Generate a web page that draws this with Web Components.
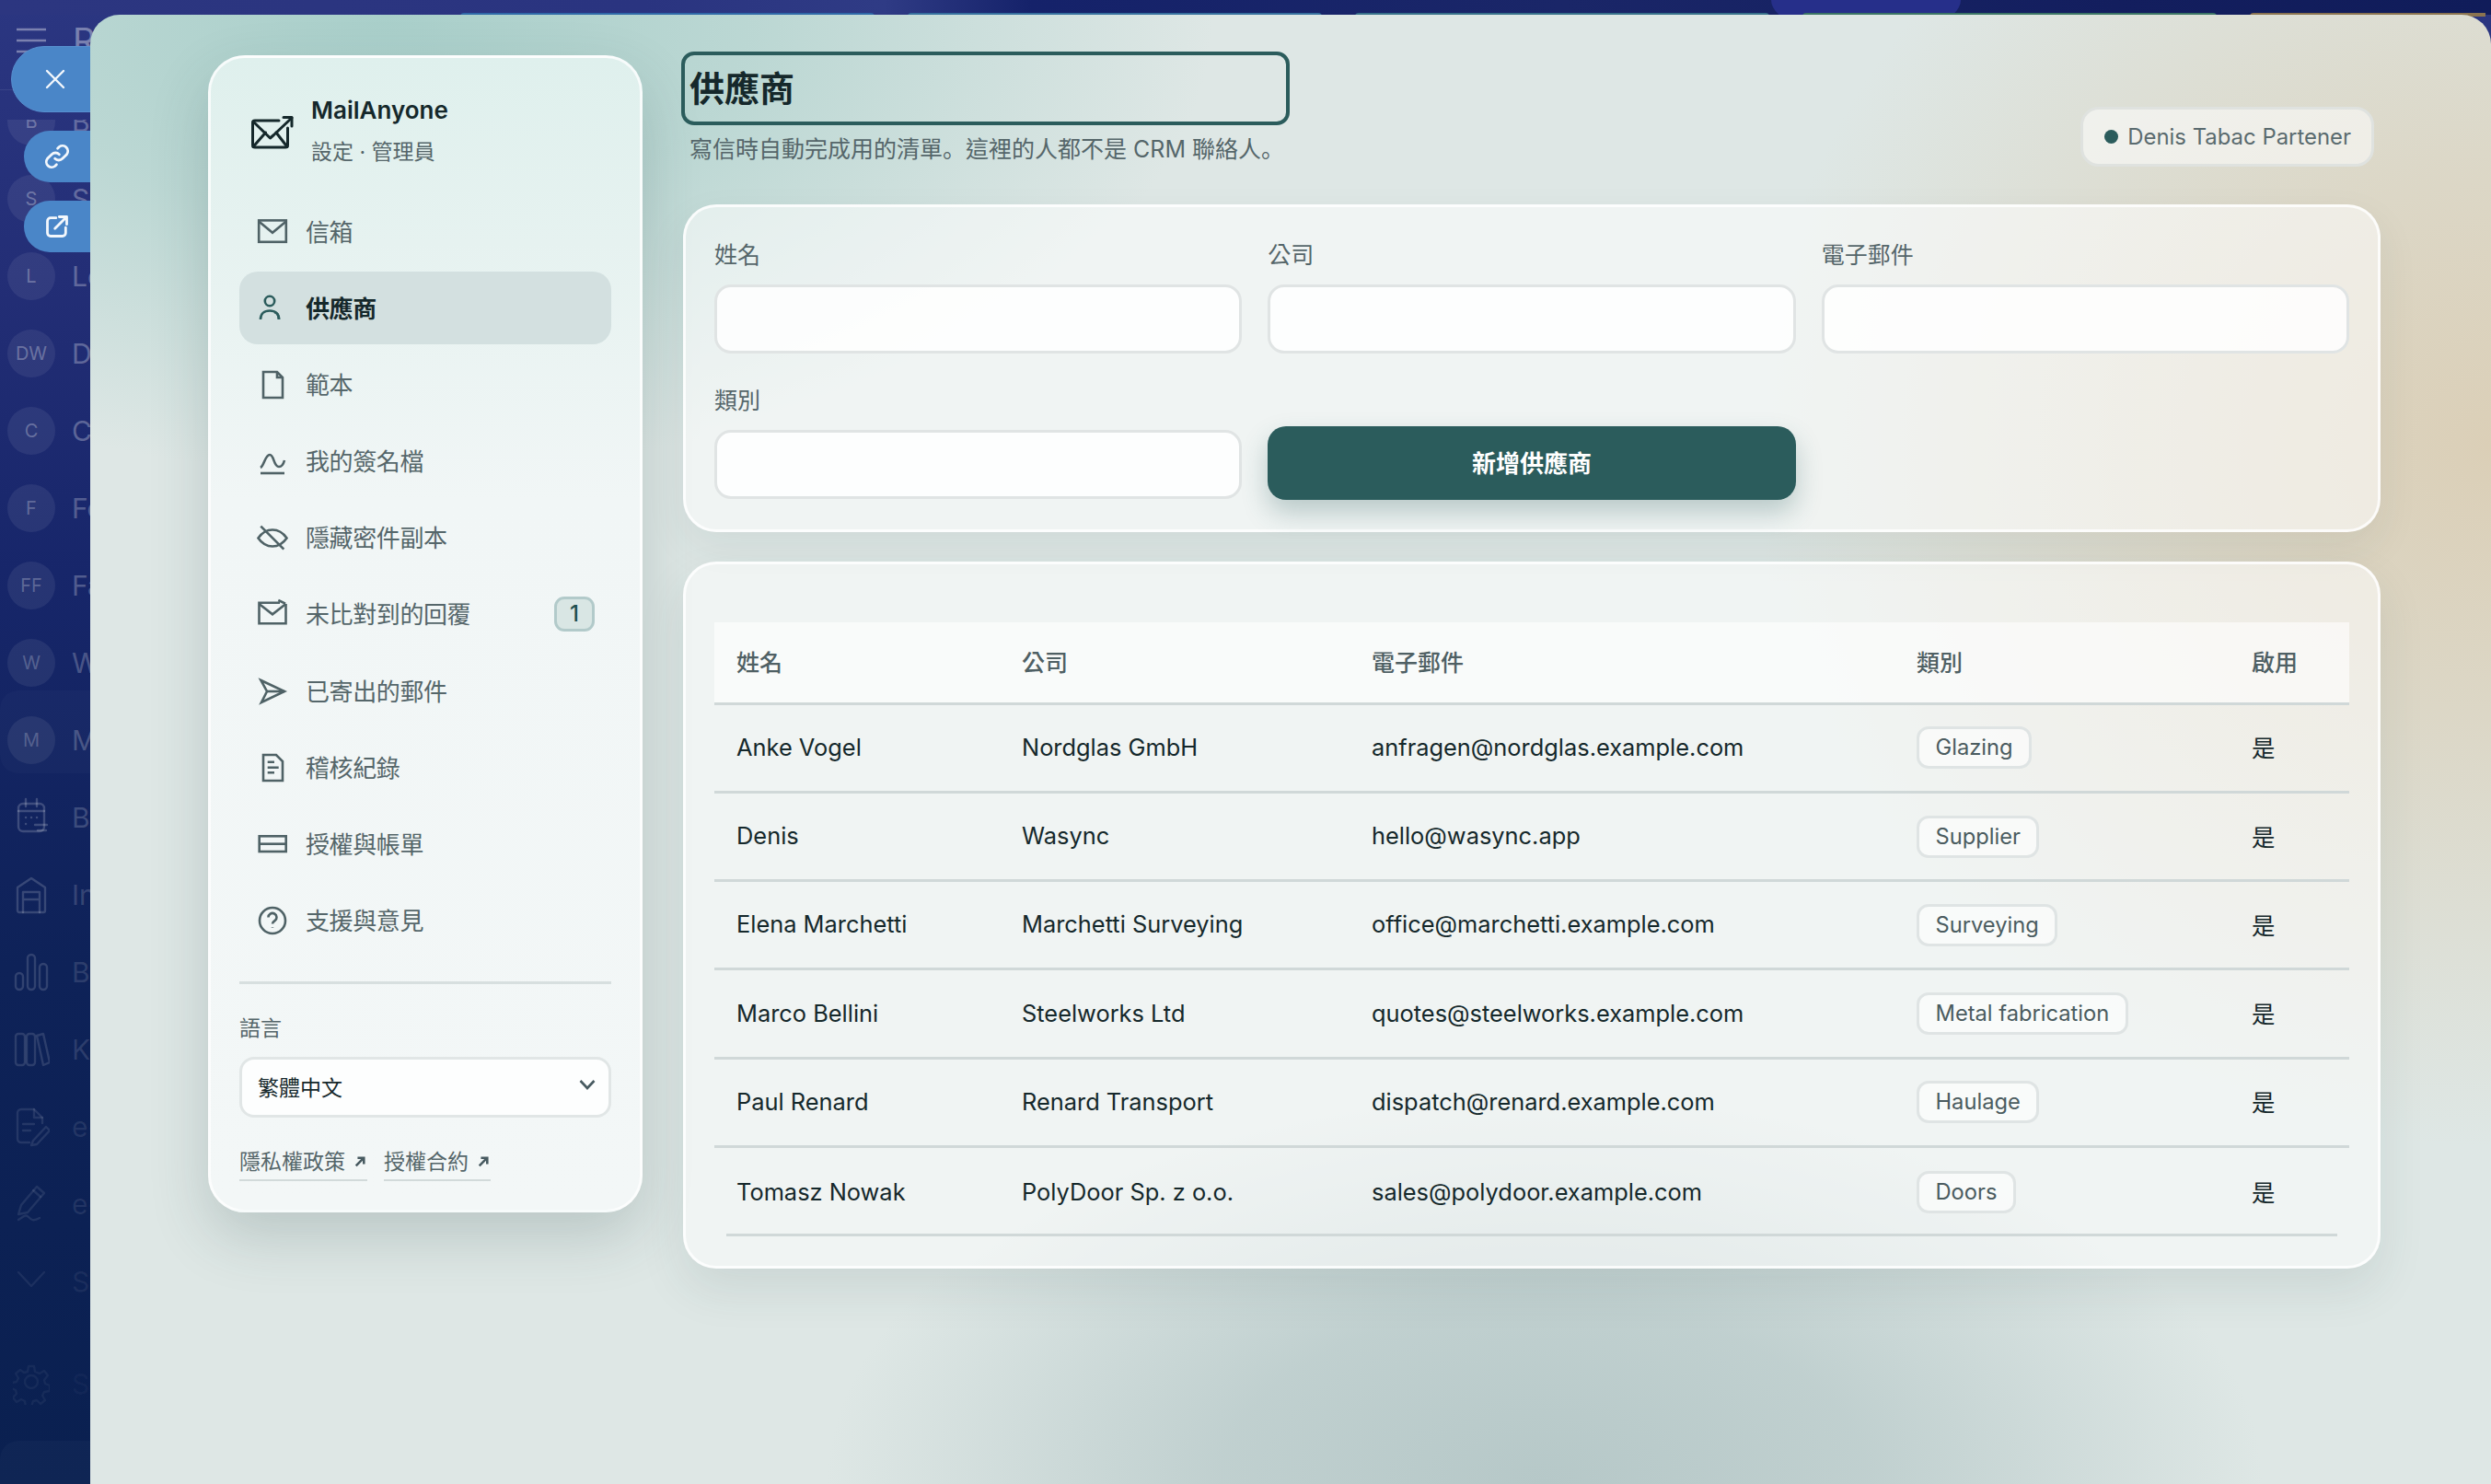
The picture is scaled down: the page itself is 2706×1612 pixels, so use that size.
<!DOCTYPE html>
<html lang="zh-Hant">
<head>
<meta charset="utf-8">
<title>供應商</title>
<style>
  html, body { margin: 0; height: 100%; background: #0c2156; overflow: hidden; }
</style>
</head>
<body>
<back-page>
  <rail-row slot="rail" badge="B" label="Bookings"></rail-row>
  <rail-row slot="rail" badge="S" label="Suppliers" alpha=".3"></rail-row>
  <rail-row slot="rail" badge="L" label="Leads" alpha=".3"></rail-row>
  <rail-row slot="rail" badge="DW" label="Deals" alpha=".3"></rail-row>
  <rail-row slot="rail" badge="C" label="Clients" alpha=".29"></rail-row>
  <rail-row slot="rail" badge="F" label="Forms" alpha=".27"></rail-row>
  <rail-row slot="rail" badge="FF" label="Fairs" alpha=".26"></rail-row>
  <rail-row slot="rail" badge="W" label="Work" alpha=".24"></rail-row>
  <rail-row slot="rail" badge="M" label="Mail" alpha=".22"></rail-row>
  <rail-row slot="rail" icon="calendar" label="Bar" alpha=".19"></rail-row>
  <rail-row slot="rail" icon="store" label="In" alpha=".17"></rail-row>
  <rail-row slot="rail" icon="bars" label="Bo" alpha=".15"></rail-row>
  <rail-row slot="rail" icon="books" label="Kn" alpha=".13"></rail-row>
  <rail-row slot="rail" icon="docpen" label="e-" alpha=".1"></rail-row>
  <rail-row slot="rail" icon="pen" label="e-" alpha=".09"></rail-row>
  <rail-row slot="rail" icon="chevron" label="Sh" alpha=".07"></rail-row>
  <rail-row slot="rail" icon="gear" label="Se" alpha=".05" style="margin-top:27px"></rail-row>
</back-page>

<float-actions></float-actions>

<settings-modal>
  <settings-nav slot="nav" brand="MailAnyone" sub="設定 · 管理員">
    <nav-item icon="mail">信箱</nav-item>
    <nav-item icon="person" active>供應商</nav-item>
    <nav-item icon="file">範本</nav-item>
    <nav-item icon="sign">我的簽名檔</nav-item>
    <nav-item icon="eyeoff">隱藏密件副本</nav-item>
    <nav-item icon="unmatched" count="1">未比對到的回覆</nav-item>
    <nav-item icon="send">已寄出的郵件</nav-item>
    <nav-item icon="audit">稽核紀錄</nav-item>
    <nav-item icon="card">授權與帳單</nav-item>
    <nav-item icon="help">支援與意見</nav-item>
  </settings-nav>

  <page-head slot="main" heading="供應商" note="寫信時自動完成用的清單。這裡的人都不是 CRM 聯絡人。" account="Denis Tabac Partener"></page-head>
  <supplier-form slot="main"></supplier-form>
  <supplier-table slot="main"></supplier-table>
</settings-modal>

<script>
  const FONT = 'Inter, "Noto Sans CJK TC", sans-serif';

  // 36x36 boxes, one unit is one pixel of the screenshot
  const navIcons = {
    mail: '<rect x="3.2" y="5.4" width="29.6" height="23.4"/><path d="M3.2 6.5 18 18.7 32.8 6.5"/>',
    person: '<circle cx="15" cy="10" r="5.2"/><path d="M5 30c0-6 4-9.5 10-9.5S25 24 25 30"/><path d="M20 22c3 .8 5 3.4 5 8"/>',
    file: '<path d="M8 4h15l6 6v22H8z"/><path d="M23 4v6h6"/>',
    sign: '<path d="M5 25c4-2 5-14 10-14s4 13 10 13c3 0 5-3 6-7"/><path d="M5 31h26"/>',
    eyeoff: '<path d="M2.5 18.5C7 12 12 9.5 18 9.5s11 2.5 15.500 9c-4.500 6.500-9.500 9-15.500 9s-11-2.500-15.500-9z"/><path d="M5.300 5.700 30.300 30.700"/>',
    unmatched: '<path d="M26 5.700H3.500v22.600h29V7"/><path d="M3.500 7 18 18.300 32.500 7"/><path d="M24.300 3 32 6.700"/>',
    send: '<path d="M5.500 6 31 18 6 30l6-12z"/><path d="M12 18h19"/>',
    audit: '<path d="M8 4h14l7 7v21H8z"/><path d="M12.700 11.700H20M12.700 17.700h12M12.700 23.300H20"/>',
    card: '<rect x="3.700" y="9.300" width="29" height="16.700"/><path d="M3.700 17.700h29"/>',
    help: '<circle cx="18" cy="18" r="14"/><path d="M13.500 14.500a4.500 4.500 0 1 1 7 3.700c-1.500 1-2.500 1.700-2.500 3.300"/><path d="M18 25.200v.6"/>'
  };

  const railIcons = {
    calendar: '<rect x="6" y="8" width="28" height="30" rx="5"/><path d="M14 3v8M26 3v8M6 16h28"/><path d="M14 23h.1M20 23h.1M26 23h.1M14 30h.1"/><path d="M24 31h13M27 37h9"/>',
    store: '<path d="M5 40V15L20 5l15 10v25a2 2 0 0 1-2 2H7a2 2 0 0 1-2-2z"/><path d="M11 42V20h18v22M11 28h18"/>',
    bars: '<rect x="3" y="24" width="8" height="18" rx="4"/><rect x="16" y="4" width="8" height="38" rx="4"/><rect x="29" y="14" width="8" height="28" rx="4"/>',
    books: '<rect x="3" y="6" width="10" height="34" rx="3"/><rect x="15" y="6" width="9" height="34" rx="3"/><path d="m26 8 7-2 7 31-7 3z"/>',
    docpen: '<path d="M18 40H9a4 4 0 0 1-4-4V8a4 4 0 0 1 4-4h14l9 9v6"/><path d="M23 4v9h9M11 20h12M11 27h8"/><path d="m22 38 14-15 4 4-14 15-6 1z"/>',
    pen: '<path d="m6 34 3-10L26 4l8 7-18 21z"/><path d="m22 8 8 7"/><path d="M6 40c6-4 8-6 11-3s5 5 12 1"/>',
    chevron: '<path d="m6 13 14 15 14-15"/>',
    gear: '<circle cx="20" cy="21" r="7"/><path d="M17 4h6l1 6 5 2 5-3 4 5-4 5 1 4 5 2v6l-6 1-2 4 3 5-5 4-4-4-4 1-2 6h-6l-1-6-4-2-5 3-4-5 4-4-1-4-5-2v-6l6-1 2-4-3-5 5-4 4 3 4-1z"/>'
  };

  /* page that lies behind the modal */
  const backTpl = document.createElement('template');
  backTpl.innerHTML = `
    <style>
      :host { display: flex; flex-direction: column; position: absolute; inset: 0; overflow: hidden;
        background: linear-gradient(180deg, #2b3681 0, #232e76 300px, #17266a 620px, #0e2258 1050px, #0a2050 1612px); font-family: ${FONT}; }
      #top { position: absolute; left: 0; right: 0; top: 0; height: 16px;
        background: linear-gradient(90deg, #2c3680 0, #2a3480 700px, #2f3b85 960px, #15226a 1120px, #1a2668 1700px, #131e5e 2300px, #101c5a 2706px); }
      #blob { position: absolute; left: 1924px; top: -40px; width: 206px; height: 80px; border-radius: 50%; background: #262f8a; }
      #strips { position: absolute; left: 500px; right: 0; top: 14px; display: flex; gap: 36px; }
      #strips i { display: block; width: 450px; height: 4px; border-radius: 4px 4px 0 0; }
      #head { height: 98px; flex: none; box-sizing: border-box; padding: 26px 0 0 16px; display: flex; gap: 12px; border-bottom: 1px solid rgba(255,255,255,.08); color: rgba(255,255,255,.38); font-size: 38px; line-height: 36px; }
      #head svg { width: 36px; height: 36px; flex: none; }
      #list { margin-top: 32px; height: calc(100% - 130px); overflow: hidden; position: relative; }
      #inner { margin-top: -40px; display: flex; flex-direction: column; }
      #group { position: absolute; left: 0; top: 620px; width: 130px; height: 90px; background: rgba(255,255,255,.02); border-radius: 20px; }
      #foot { position: absolute; left: 0; bottom: 0; width: 130px; height: 47px; background: rgba(255,255,255,.025); border-radius: 20px 0 0 0; }
    </style>
    <div id="top">
      <div id="blob"></div>
      <div id="strips">
        <i style="background:#2f69a8"></i><i style="background:#36709e"></i><i style="background:#37718a"></i><i style="background:#3b7565"></i><i style="background:#8a7350;width:256px;border-radius:4px 0 0 0"></i>
      </div>
    </div>
    <div id="head">
      <svg viewBox="0 0 36 36" fill="none" stroke="currentColor" stroke-width="2.4"><path d="M2 6h32M2 18h32M2 30h32"/></svg>
      <span style="margin-left:15px">Re</span>
    </div>
    <div id="list"><div id="group"></div><div id="inner"><slot name="rail"></slot></div></div>
    <div id="foot"></div>`;
  class BackPage extends HTMLElement {
    constructor() {
      super();
      this.attachShadow({ mode: 'open' }).appendChild(backTpl.content.cloneNode(true));
    }
  }
  customElements.define('back-page', BackPage);

  const rowTpl = document.createElement('template');
  rowTpl.innerHTML = `
    <style>
      :host { display: flex; align-items: center; height: 84px; flex: none; width: 200px; font-family: ${FONT}; }
      #mark { width: 52px; height: 52px; margin-left: 8px; flex: none; display: flex; align-items: center; justify-content: center; border-radius: 50%; font-size: 20px; }
      #mark svg { width: 40px; height: 46px; fill: none; stroke: currentColor; stroke-width: 2.400; stroke-linecap: round; stroke-linejoin: round; }
      #text { margin-left: 18px; font-size: 30px; }
    </style>
    <div id="mark"></div><div id="text"></div>`;
  class RailRow extends HTMLElement {
    constructor() {
      super();
      this.attachShadow({ mode: 'open' }).appendChild(rowTpl.content.cloneNode(true));
    }
    connectedCallback() {
      const a = this.getAttribute('alpha') || '.3';
      const mark = this.shadowRoot.querySelector('#mark');
      const text = this.shadowRoot.querySelector('#text');
      this.style.color = `rgba(255,255,255,${a})`;
      text.textContent = this.getAttribute('label');
      if (this.hasAttribute('icon')) {
        mark.innerHTML = `<svg viewBox="0 0 40 46">${railIcons[this.getAttribute('icon')]}</svg>`;
      } else {
        mark.textContent = this.getAttribute('badge');
        mark.style.background = 'rgba(255,255,255,.07)';
      }
    }
  }
  customElements.define('rail-row', RailRow);

  /* blue tabs that stick out from under the modal */
  const floatTpl = document.createElement('template');
  floatTpl.innerHTML = `
    <style>
      :host { display: flex; flex-direction: column; align-items: flex-start; position: absolute; left: 12px; top: 50px; width: 130px; gap: 20px; }
      div { display: flex; align-items: center; background: #4a86c8; box-sizing: border-box; }
      #close { width: 130px; height: 72px; border-radius: 36px 0 0 36px; padding-left: 35px; border: 1px solid #5790d0; }
      .small { margin-left: 14px; width: 116px; height: 56px; border-radius: 28px 0 0 28px; padding-left: 22px; }
      svg { fill: none; stroke: #f3f7fc; stroke-width: 2.400; stroke-linecap: round; stroke-linejoin: round; }
    </style>
    <div id="close"><svg width="24" height="24" viewBox="0 0 24 24"><path d="M3 3l18 18M21 3 3 21"/></svg></div>
    <div class="small"><svg width="28" height="28" viewBox="0 0 24 24"><path d="M10 14a5 5 0 0 0 7 0l4-4a5 5 0 0 0-7-7l-1.500 1.500"/><path d="M14 10a5 5 0 0 0-7 0l-4 4a5 5 0 0 0 7 7l1.500-1.500"/></svg></div>
    <div class="small" style="margin-top:0"><svg width="28" height="28" viewBox="0 0 24 24"><path d="M11 4H6a3 3 0 0 0-3 3v11a3 3 0 0 0 3 3h11a3 3 0 0 0 3-3v-5"/><path d="M10 14 21 3M14 3h7v7"/></svg></div>`;
  class FloatActions extends HTMLElement {
    constructor() {
      super();
      this.attachShadow({ mode: 'open' }).appendChild(floatTpl.content.cloneNode(true));
    }
  }
  customElements.define('float-actions', FloatActions);

  /* modal */
  const modalTpl = document.createElement('template');
  modalTpl.innerHTML = `
    <style>
      :host { display: flex; gap: 44px; align-items: flex-start; position: absolute; left: 98px; top: 16px; right: 0; bottom: 0; box-sizing: border-box; padding: 40px 120px 0 128px;
        border-radius: 32px 32px 0 0; overflow: hidden; font-family: ${FONT};
        background:
          radial-gradient(ellipse 780px 430px at 1580px 1596px, #b6c8c8 0, rgba(182,200,200,.75) 45%, rgba(182,200,200,0) 100%),
          radial-gradient(ellipse 800px 760px at 2608px 470px, #dbcfb7 0, rgba(219,207,183,.65) 40%, rgba(219,207,183,0) 100%),
          radial-gradient(ellipse 900px 500px at 320px 0, #a9cfca 0, rgba(169,207,202,.65) 45%, rgba(169,207,202,0) 100%),
          #dee7e5; }
      #nav { flex: none; margin-top: 4px; display: block; }
      #main { flex: 1; min-width: 0; display: flex; flex-direction: column; }
    </style>
    <div id="nav"><slot name="nav"></slot></div>
    <div id="main"><slot name="main"></slot></div>`;
  class SettingsModal extends HTMLElement {
    constructor() {
      super();
      this.attachShadow({ mode: 'open' }).appendChild(modalTpl.content.cloneNode(true));
    }
  }
  customElements.define('settings-modal', SettingsModal);

  const navTpl = document.createElement('template');
  navTpl.innerHTML = `
    <style>
      :host { display: block; box-sizing: border-box; width: 472px; height: 1257px; padding: 0 31px; border: 3px solid rgba(255,255,255,.75); border-radius: 40px;
        background: linear-gradient(180deg, #dff0ed 0, #e6f2f0 200px, #f1f6f6 480px, #f3f7f7 100%);
        box-shadow: 0 26px 64px rgba(40,70,70,.2); }
      #brand { height: 149px; box-sizing: border-box; padding: 40px 0 0 10px; display: flex; align-items: flex-start; gap: 18px; }
      #brand svg { margin-top: 20px; flex: none; }
      #name { font-size: 26px; line-height: 34px; font-weight: 600; color: #15282b; }
      #sub { font-size: 23px; line-height: 34px; margin-top: 11px; color: #55666a; }
      nav { display: flex; flex-direction: column; gap: 4.200px; }
      hr { border: 0; height: 3px; background: #d7dfdf; margin: 26.500px 0 0; }
      label { display: block; margin-top: 30.500px; font-size: 23px; line-height: 34px; color: #55666a; }
      #pick { position: relative; margin-top: 14px; }
      select { display: block; width: 100%; height: 66px; box-sizing: border-box; border: 3px solid #e1e6e6; border-radius: 16px; background: #fdfefe; appearance: none; padding: 2px 0 0 17px; font: 23px ${FONT}; color: #15282b; }
      #pick svg { position: absolute; right: 17px; top: 24px; pointer-events: none; }
      #links { display: flex; gap: 18px; margin-top: 31px; }
      a { display: flex; align-items: center; gap: 10px; font-size: 23px; line-height: 34px; color: #55666a; text-decoration: none; padding: 0 2px 2px 0; border-bottom: 2px solid #d2dada; }
      a svg { flex: none; width: 12px; height: 12px; }
    </style>
    <div id="brand">
      <svg width="50" height="40" viewBox="0 0 50 40" fill="none" stroke="#15282b" stroke-width="3" stroke-linecap="round" stroke-linejoin="round">
        <path d="M33 8H7a2.500 2.500 0 0 0-2.500 2.500v24A2.500 2.500 0 0 0 7 37h33a2.500 2.500 0 0 0 2.500-2.500V16"/>
        <path d="m5 9 18.500 18 4-3.500L47 5"/><path d="M38 4.500h9V14"/><path d="M5 36.500 18.500 21M42 36.500 30 21"/>
      </svg>
      <div><div id="name"></div><div id="sub"></div></div>
    </div>
    <nav><slot></slot></nav>
    <hr>
    <label>語言</label>
    <div id="pick">
      <select><option>繁體中文</option></select>
      <svg width="18" height="12" viewBox="0 0 18 12" fill="none" stroke="#475a60" stroke-width="2.600"><path d="m1.500 2 7.500 8 7.500-8"/></svg>
    </div>
    <div id="links">
      <a>隱私權政策<svg viewBox="0 0 14 14" fill="none" stroke="#475a60" stroke-width="3"><path d="M2 12 12 2M4 2h8v8"/></svg></a>
      <a>授權合約<svg viewBox="0 0 14 14" fill="none" stroke="#475a60" stroke-width="3"><path d="M2 12 12 2M4 2h8v8"/></svg></a>
    </div>`;
  class SettingsNav extends HTMLElement {
    constructor() {
      super();
      this.attachShadow({ mode: 'open' }).appendChild(navTpl.content.cloneNode(true));
    }
    connectedCallback() {
      this.shadowRoot.querySelector('#name').textContent = this.getAttribute('brand');
      this.shadowRoot.querySelector('#sub').textContent = this.getAttribute('sub');
    }
  }
  customElements.define('settings-nav', SettingsNav);

  const itemTpl = document.createElement('template');
  itemTpl.innerHTML = `
    <style>
      :host { display: flex; align-items: center; height: 79px; box-sizing: border-box; padding: 0 18px; gap: 18px; border-radius: 20px; font-size: 26px; letter-spacing: -.4px; color: #55666a; }
      :host([active]) { background: #d3e0e0; color: #15282b; font-weight: 600; }
      svg { flex: none; fill: none; stroke: #4f6266; stroke-width: 2.600; stroke-linejoin: miter; }
      :host([active]) svg { stroke: #2b5c5c; }
      #label { padding-bottom: 3px; }
      #count { margin-left: auto; display: none; box-sizing: border-box; width: 44px; height: 38px; line-height: 32px; text-align: center; border: 3px solid #b2caca; border-radius: 11px; background: #d9e6e4; color: #1f5050; font-size: 24px; font-weight: 500; letter-spacing: 0; }
    </style>
    <svg width="36" height="36" viewBox="0 0 36 36"></svg>
    <span id="label"><slot></slot></span>
    <span id="count"></span>`;
  class NavItem extends HTMLElement {
    constructor() {
      super();
      this.attachShadow({ mode: 'open' }).appendChild(itemTpl.content.cloneNode(true));
    }
    connectedCallback() {
      this.shadowRoot.querySelector('svg').innerHTML = navIcons[this.getAttribute('icon')];
      if (this.hasAttribute('count')) {
        const c = this.shadowRoot.querySelector('#count');
        c.textContent = this.getAttribute('count');
        c.style.display = 'block';
      }
    }
  }
  customElements.define('nav-item', NavItem);

  const headTpl = document.createElement('template');
  headTpl.innerHTML = `
    <style>
      :host { display: flex; justify-content: space-between; align-items: flex-start; height: 125px; margin-bottom: 41px; }
      #left { width: 661px; margin-left: -2px; }
      h1 { margin: 0; box-sizing: border-box; height: 80px; line-height: 72px; border: 4px solid #2b5c5c; border-radius: 14px; padding-left: 5px; font-size: 38px; font-weight: 700; color: #15282b; }
      p { margin: 6px 0 0 9px; font-size: 25px; line-height: 36px; color: #55666a; white-space: nowrap; }
      /* the full stop sits low and left in the reference */
      p span { font-family: "Noto Sans CJK SC", sans-serif; }
      #acct { align-self: flex-end; margin-right: 7px; box-sizing: border-box; height: 65px; padding: 0 22px 0 23px; display: flex; align-items: center; gap: 10px; border: 3px solid #dfe2df; border-radius: 20px; background: rgba(255,255,255,.55); font-size: 23.900px; color: #5a6b6f; }
      i { width: 15px; height: 15px; border-radius: 50%; background: #2b5c5c; }
    </style>
    <div id="left"><h1></h1><p></p></div>
    <div id="acct"><i></i><b style="font-weight:400"></b></div>`;
  class PageHead extends HTMLElement {
    constructor() {
      super();
      this.attachShadow({ mode: 'open' }).appendChild(headTpl.content.cloneNode(true));
    }
    connectedCallback() {
      this.shadowRoot.querySelector('h1').textContent = this.getAttribute('heading');
      this.shadowRoot.querySelector('p').innerHTML = this.getAttribute('note').replace(/。/g, '<span lang="zh-Hans">。</span>');
      this.shadowRoot.querySelector('#acct b').textContent = this.getAttribute('account');
    }
  }
  customElements.define('page-head', PageHead);

  const formTpl = document.createElement('template');
  formTpl.innerHTML = `
    <style>
      :host { display: grid; grid-template-columns: repeat(3, 1fr); gap: 31px 28px; box-sizing: border-box; padding: 32px 31px 33px; margin-bottom: 32px; border: 3px solid rgba(255,255,255,.8); border-radius: 36px; background: rgba(255,255,255,.55); box-shadow: 0 18px 44px rgba(40,70,70,.08); }
      label { display: block; font-size: 25px; line-height: 40px; margin-bottom: 12px; color: #55666a; }
      input { display: block; width: 100%; height: 75px; box-sizing: border-box; border: 3px solid #e0e4e4; border-radius: 18px; background: rgba(255,255,255,.85); }
      button { align-self: end; height: 80px; margin-bottom: -1px; padding: 0 0 3px; border: 0; border-radius: 20px; background: #2b5c5c; color: #fff; font: 600 26px ${FONT}; box-shadow: 0 14px 28px rgba(43,92,92,.28); }
    </style>
    <div><label>姓名</label><input></div>
    <div><label>公司</label><input></div>
    <div><label>電子郵件</label><input></div>
    <div><label>類別</label><input></div>
    <button>新增供應商</button>`;
  class SupplierForm extends HTMLElement {
    constructor() {
      super();
      this.attachShadow({ mode: 'open' }).appendChild(formTpl.content.cloneNode(true));
    }
  }
  customElements.define('supplier-form', SupplierForm);

  const suppliers = [
    ['Anke Vogel', 'Nordglas GmbH', 'anfragen@nordglas.example.com', 'Glazing'],
    ['Denis', 'Wasync', 'hello@wasync.app', 'Supplier'],
    ['Elena Marchetti', 'Marchetti Surveying', 'office@marchetti.example.com', 'Surveying'],
    ['Marco Bellini', 'Steelworks Ltd', 'quotes@steelworks.example.com', 'Metal fabrication'],
    ['Paul Renard', 'Renard Transport', 'dispatch@renard.example.com', 'Haulage'],
    ['Tomasz Nowak', 'PolyDoor Sp. z o.o.', 'sales@polydoor.example.com', 'Doors']
  ];

  const tableTpl = document.createElement('template');
  tableTpl.innerHTML = `
    <style>
      :host { display: block; box-sizing: border-box; padding: 63px 31px 32px; border: 3px solid rgba(255,255,255,.8); border-radius: 36px; background: rgba(255,255,255,.55); box-shadow: 0 22px 50px rgba(40,70,70,.1); }
      table { width: 100%; table-layout: fixed; border-collapse: separate; border-spacing: 0; }
      th, td { box-sizing: border-box; padding: 0 0 0 24px; text-align: left; border-bottom: 3px solid #d0d8d8; }
      th { height: 89.600px; padding-bottom: 2px; background: rgba(255,255,255,.6); font-size: 25px; font-weight: 500; color: #4f6064; }
      td { height: 96.300px; padding-bottom: 2px; font-size: 25.400px; color: #15282b; }
      /* the last rule stops short of both ends */
      tr:last-child td { border-bottom: 0; background: linear-gradient(#d0d8d8, #d0d8d8) no-repeat 0 100% / 100% 3px; }
      tr:last-child td:first-child { background-position: 13px 100%; }
      tr:last-child td:last-child { background-position: -13px 100%; }
      tag-chip { position: relative; top: 1px; }
    </style>
    <table>
      <colgroup><col style="width:310px"><col style="width:380px"><col style="width:592px"><col style="width:364px"><col></colgroup>
      <thead><tr><th>姓名</th><th>公司</th><th>電子郵件</th><th>類別</th><th>啟用</th></tr></thead>
      <tbody></tbody>
    </table>`;
  class SupplierTable extends HTMLElement {
    constructor() {
      super();
      this.attachShadow({ mode: 'open' }).appendChild(tableTpl.content.cloneNode(true));
    }
    connectedCallback() {
      const body = this.shadowRoot.querySelector('tbody');
      body.innerHTML = '';
      suppliers.forEach(s => {
        const tr = document.createElement('tr');
        tr.innerHTML = `<td>${s[0]}</td><td>${s[1]}</td><td>${s[2]}</td><td><tag-chip>${s[3]}</tag-chip></td><td>是</td>`;
        body.appendChild(tr);
      });
    }
  }

  const chipTpl = document.createElement('template');
  chipTpl.innerHTML = `
    <style>
      :host { display: inline-block; box-sizing: border-box; height: 46px; line-height: 40px; padding: 0 17.500px; border: 3px solid #dfe4e4; border-radius: 13px; background: rgba(255,255,255,.6); font-size: 23.700px; color: #4b5c60; vertical-align: middle; }
    </style>
    <slot></slot>`;
  class TagChip extends HTMLElement {
    constructor() {
      super();
      this.attachShadow({ mode: 'open' }).appendChild(chipTpl.content.cloneNode(true));
    }
  }
  customElements.define('tag-chip', TagChip);
  customElements.define('supplier-table', SupplierTable);
</script>
</body>
</html>
